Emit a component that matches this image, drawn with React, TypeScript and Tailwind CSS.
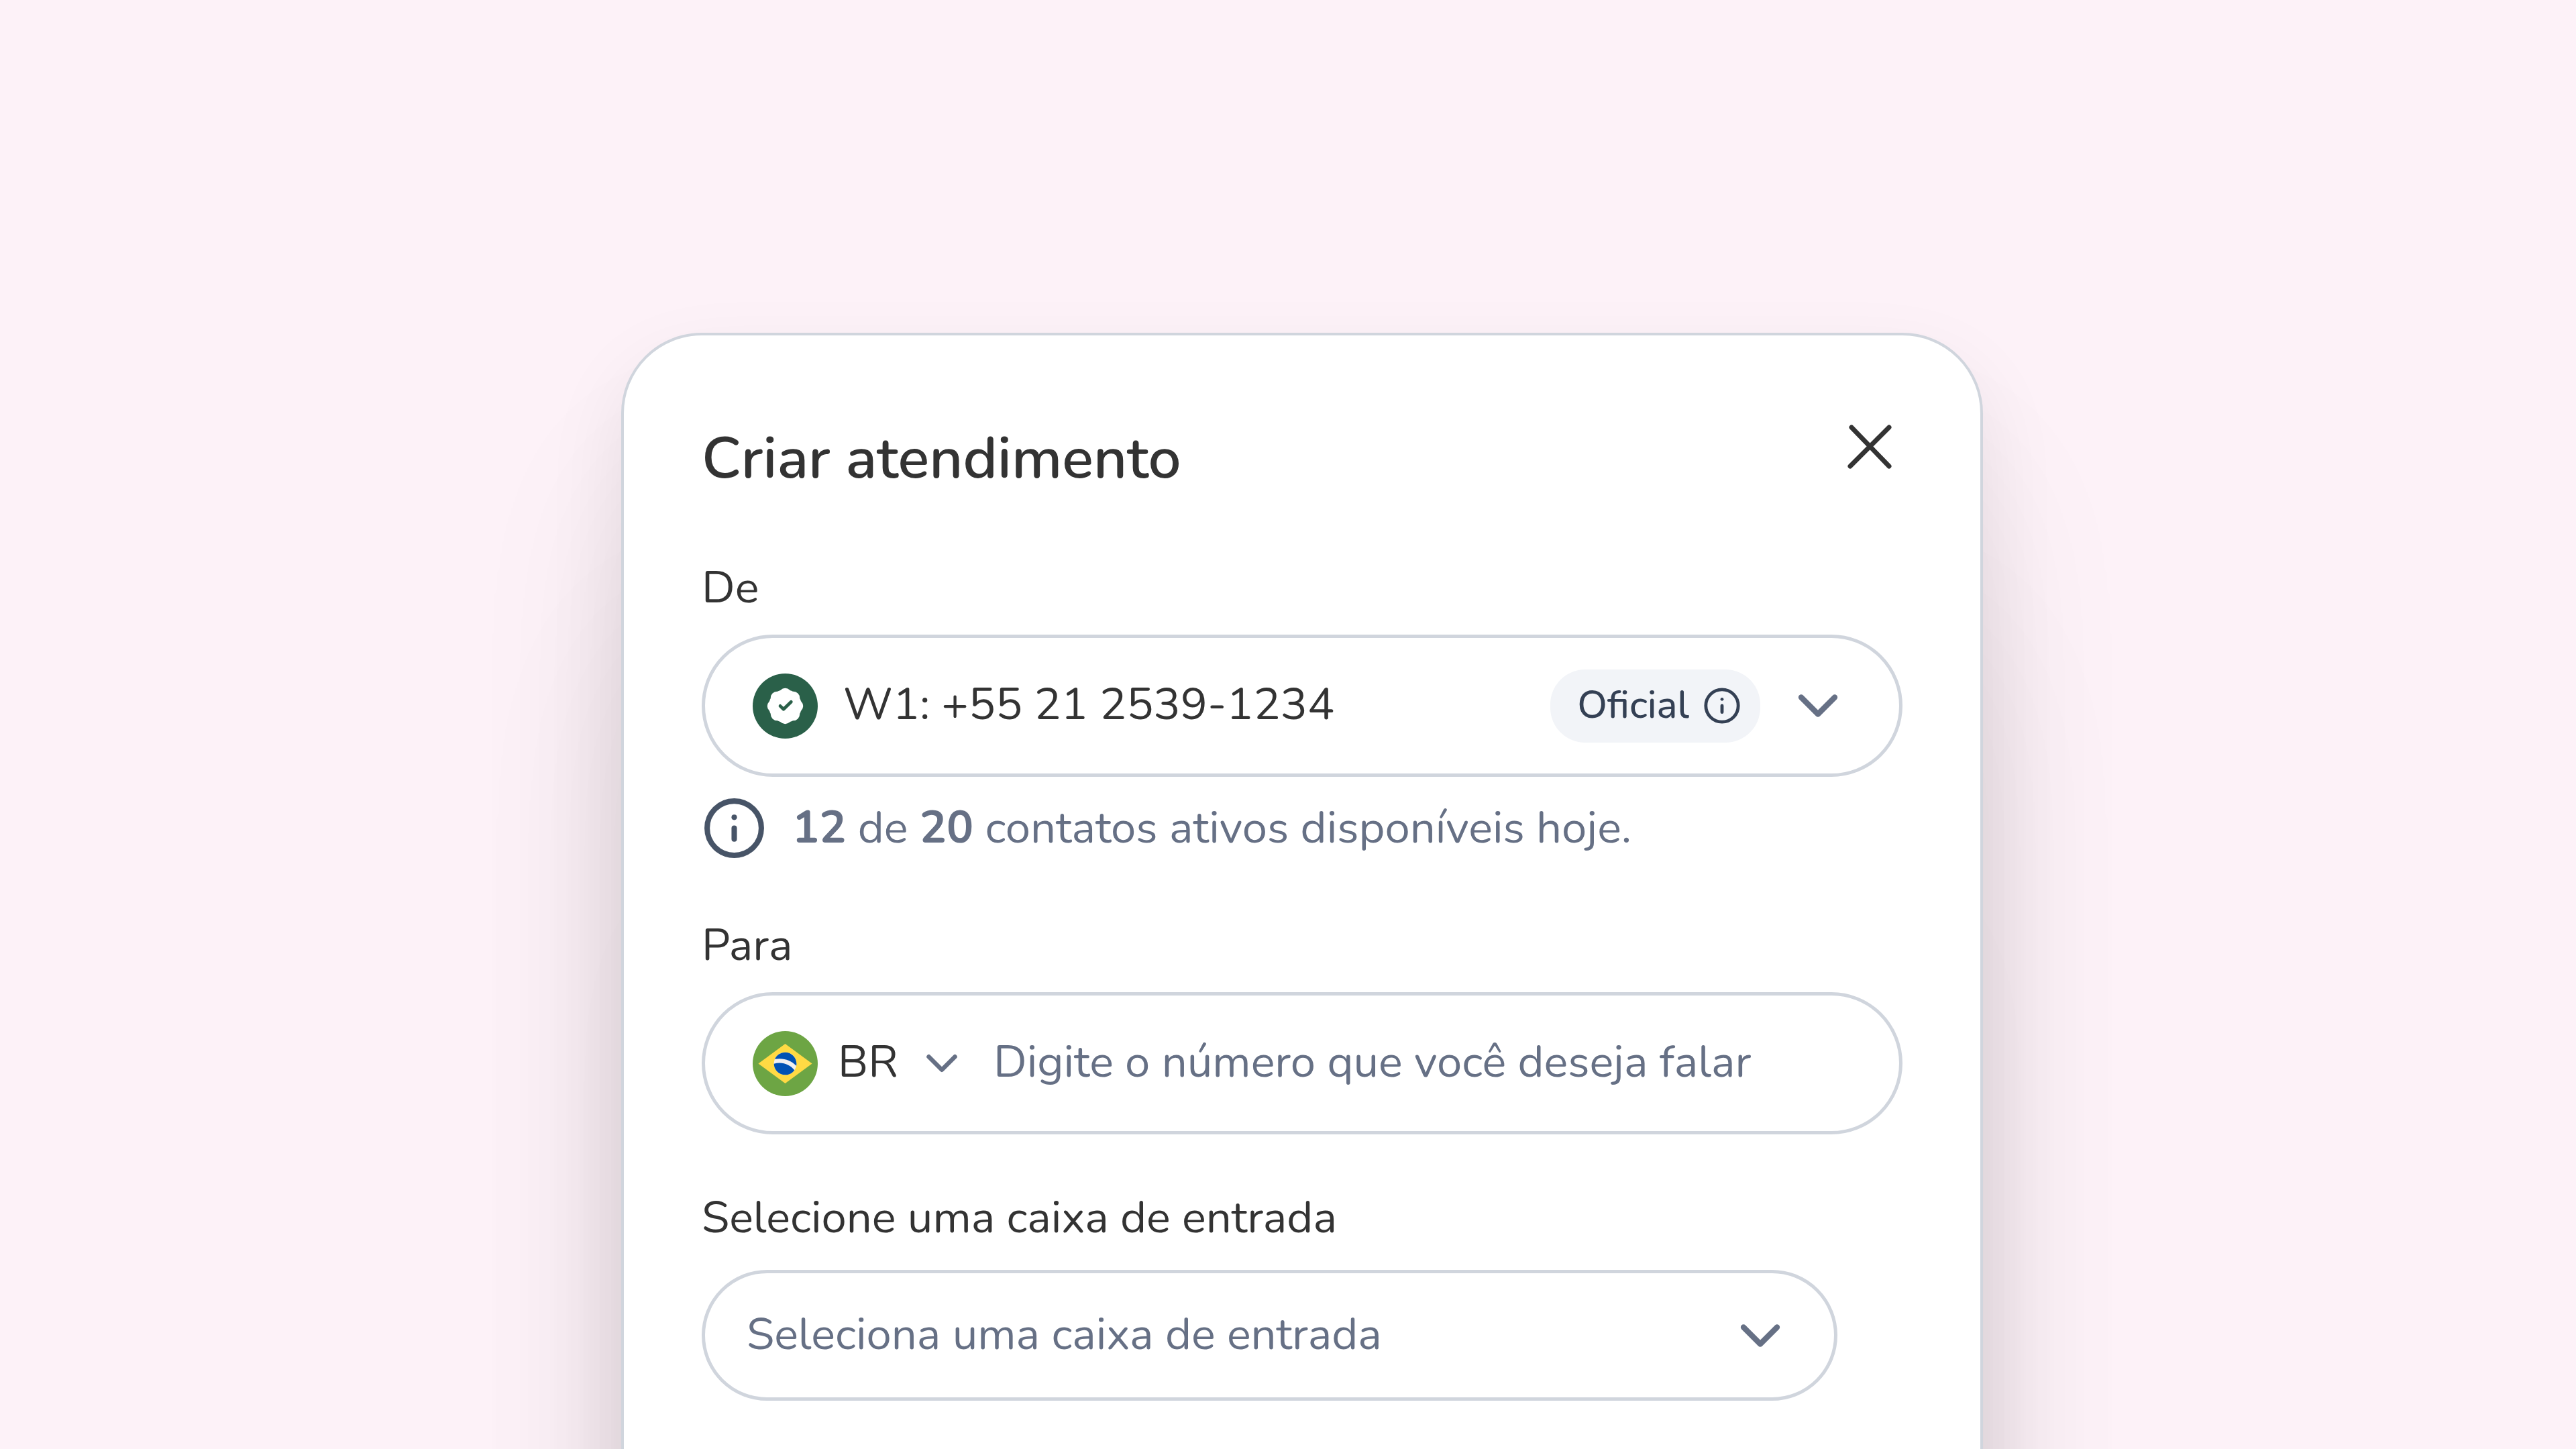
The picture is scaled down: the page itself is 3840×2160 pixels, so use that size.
import { useState } from 'react';
import { ChevronDown, Info } from 'lucide-react';

const labelClass = 'block text-[67px] leading-[92px] text-[#333333]';
const fieldClass = 'flex items-center rounded-full border-[5px] border-[#d0d5dd] bg-white text-[67px]';
const selectClass = 'appearance-none bg-transparent p-0 pb-1 leading-[92px] outline-none';

export default function App() {
  const [phone, setPhone] = useState('');
  const [inbox, setInbox] = useState('');

  return (
    <main className="flex h-screen justify-center overflow-hidden bg-[#fdf2f8] pl-[42px] pt-[496px] font-['Nunito','Lato',sans-serif]">
      <form className="h-max w-full max-w-[2030px] rounded-[120px] border-4 border-[#d0d5dd] bg-white px-[116px] pb-[1200px] pt-[116px] shadow-[0_50px_120px_rgba(0,0,0,0.08),0_200px_240px_rgba(0,0,0,0.08),0_450px_420px_rgba(0,0,0,0.06),0_800px_320px_rgba(0,0,0,0.01)]">
        <header className="flex items-start justify-between">
          <h1 className="mt-3.5 text-[87px] font-semibold leading-[108px] text-[#333333]">Criar atendimento</h1>
          <button type="button" aria-label="Fechar" className="text-[#333333]">
            <svg viewBox="0 0 100 100" className="size-[100px]" fill="none" stroke="currentColor" strokeWidth="7" strokeLinecap="round">
              <path d="M24 21l56 58M80 21L22 79" />
            </svg>
          </button>
        </header>

        <label htmlFor="from" className={`mt-23 ${labelClass}`}>De</label>
        <div className={`mt-6 h-[212px] px-[71px] ${fieldClass}`}>
          <VerifiedIcon />
          <select id="from" className={`ml-[38px] min-w-0 flex-1 text-[#333333] ${selectClass}`}>
            <option>W1: +55 21 2539-1234</option>
          </select>
          <span className="flex h-[109px] items-center rounded-[52px] bg-[#f2f4f8] pl-10 pr-7 text-[58px] font-medium text-[#344054]">
            <span className="pb-1">Oficial</span>
            <Info size={58} className="ml-5" />
          </span>
          <ChevronDown size={100} className="ml-9 text-[#667085]" />
        </div>
        <div className="mt-7 flex items-start gap-[38px] text-[67px] leading-[80px] text-[#667085]">
          <Info size={97} className="shrink-0 text-[#475467]" />
          <p className="mt-2"><b>12</b> de <b>20</b> contatos ativos disponíveis hoje.</p>
        </div>

        <label htmlFor="phone" className={`mt-20 ${labelClass}`}>Para</label>
        <div className={`mt-6 h-[212px] px-[71px] ${fieldClass}`}>
          <BrazilFlag />
          <select aria-label="País" className={`ml-[30px] w-[116px] text-[#333333] ${selectClass}`}>
            <option>BR</option>
          </select>
          <ChevronDown size={78} className="shrink-0 text-[#667085]" />
          <input
            id="phone"
            type="tel"
            value={phone}
            onChange={(e) => setPhone(e.target.value)}
            placeholder="Digite o número que você deseja falar"
            className="ml-[38px] min-w-0 flex-1 bg-transparent pb-1 leading-[92px] text-[#333333] outline-none placeholder:text-[#667085]"
          />
        </div>

        <label htmlFor="inbox" className={`mt-[78px] ${labelClass}`}>Selecione uma caixa de entrada</label>
        <div className={`mr-[97px] mt-8 h-[195px] pl-[62px] pr-[60px] ${fieldClass}`}>
          <select
            id="inbox"
            value={inbox}
            onChange={(e) => setInbox(e.target.value)}
            className={`min-w-0 flex-1 text-[#667085] ${selectClass}`}
          >
            <option value="">Seleciona uma caixa de entrada</option>
          </select>
          <ChevronDown size={100} className="text-[#667085]" />
        </div>
      </form>
    </main>
  );
}

function VerifiedIcon() {
  return (
    <svg viewBox="0 0 97 97" className="size-[97px] shrink-0" aria-hidden="true">
      <circle cx="48.5" cy="48.5" r="48.5" fill="#2a6049" />
      <g fill="#fff">
        <circle cx="48.5" cy="48.5" r="24.6" />
        {[0, 45, 90, 135, 180, 225, 270, 315].map((angle) => (
          <circle key={angle} cx="48.5" cy="31.5" r="9.7" transform={`rotate(${angle} 48.5 48.5)`} />
        ))}
      </g>
      <path d="M41 48.4l5 4.9 11.3-11.1" fill="none" stroke="#2a6049" strokeWidth="4.8" strokeLinecap="round" strokeLinejoin="round" />
    </svg>
  );
}

function BrazilFlag() {
  return (
    <svg viewBox="0 0 512 512" className="size-[97px] shrink-0" aria-hidden="true">
      <circle cx="256" cy="256" r="256" fill="#6da544" />
      <path d="M256 100.2L467.5 256 256 411.8 44.5 256z" fill="#ffda44" />
      <circle cx="256" cy="256" r="89" fill="#f0f0f0" />
      <g fill="#0052b4">
        <path d="M211.5 250.4c-15.5 0-30.4 2.4-44.5 6.8.6 48.6 40.2 87.8 89 87.8 30.2 0 56.8-15 72.9-37.9-27.5-34.5-69.9-56.7-117.4-56.7z" />
        <path d="M343.4 273c1.1-5.5 1.6-11.2 1.6-17 0-49.2-39.8-89-89-89-36.7 0-68.2 22.2-81.8 53.9 12.1-2 24.6-3.1 37.3-3.1 51.6 0 98.3 21 131.9 55.2z" />
      </g>
    </svg>
  );
}
